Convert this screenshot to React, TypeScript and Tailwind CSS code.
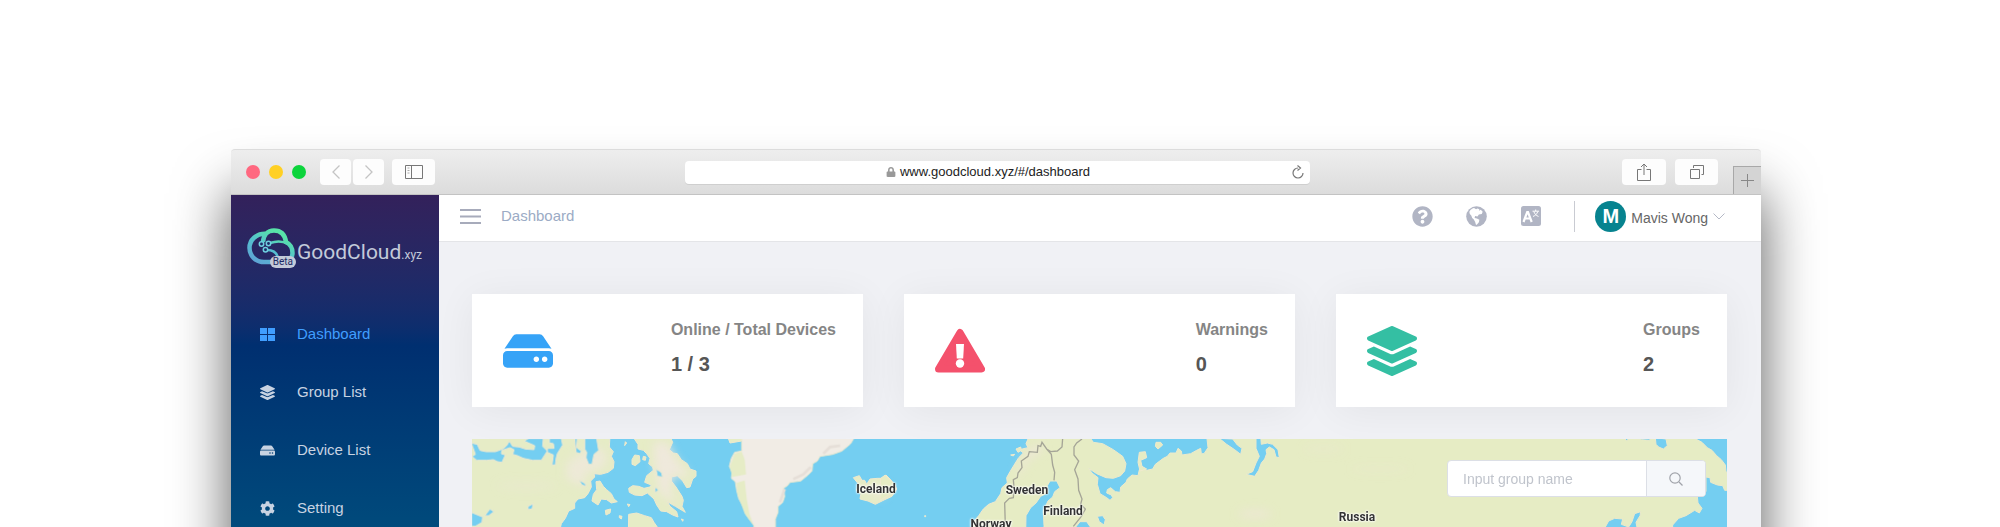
import { useState } from "react";
import { FaCog, FaHdd, FaLayerGroup, FaLock, FaQuestionCircle } from "react-icons/fa";

const NAV = [
  { label: "Dashboard", icon: TilesIcon },
  { label: "Group List", icon: FaLayerGroup },
  { label: "Device List", icon: FaHdd },
  { label: "Setting", icon: FaCog },
];

const PLACES = [
  { name: "Iceland", x: 404, y: 50 },
  { name: "Sweden", x: 555, y: 51 },
  { name: "Finland", x: 591, y: 72 },
  { name: "Norway", x: 519, y: 85 },
  { name: "Russia", x: 885, y: 78 },
];

const MAP_WIDTH = 1255;

function TilesIcon({ className }: { className?: string }) {
  return (
    <svg viewBox="0 0 15 15" className={className} fill="currentColor" aria-hidden="true">
      <rect x="0" y="1" width="7" height="6" />
      <rect x="8" y="1" width="7" height="6" />
      <rect x="0" y="8" width="7" height="6" />
      <rect x="8" y="8" width="7" height="6" />
    </svg>
  );
}

function WarningIcon({ className }: { className?: string }) {
  return (
    <svg viewBox="0 0 50 50" className={className} aria-hidden="true">
      <path
        d="M25 6.5L46.500 43H3.500z"
        fill="currentColor"
        stroke="currentColor"
        strokeWidth="7"
        strokeLinejoin="round"
      />
      <path d="M21 18h8l-.8 14.500h-6.400z" fill="#fff" />
      <circle cx="25" cy="37.500" r="4.200" fill="#fff" />
    </svg>
  );
}

function GlobeIcon({ className }: { className?: string }) {
  return (
    <svg viewBox="0 0 22 22" className={className} aria-hidden="true">
      <circle cx="11" cy="11" r="10.800" fill="currentColor" />
      <path
        d="M3.500 6C5 3.500 7 2.500 8.500 2.200L10.500 3.500 12 2.500 14 3.500 13.500 5 15.500 4 17.500 6 16.500 8.500 13.500 9 12 11 9.500 10.500 9 12.500 11.500 13 14 14.500 13.500 17 11.500 19.500 10.500 19.800 9.500 16.500 8 14 6.500 12.500 5.500 10 4 8.500z"
        fill="#fff"
      />
    </svg>
  );
}

function TranslateIcon({ className }: { className?: string }) {
  return (
    <svg viewBox="0 0 20 20" className={className} fill="none" aria-hidden="true">
      <rect width="20" height="20" rx="2.500" fill="currentColor" />
      <path d="M2.500 16L6.200 6h.8l3.700 10M3.800 12.500h5.600" stroke="#fff" strokeWidth="2.200" />
      <path
        d="M11.500 5.200h6.500M14.700 3.500v1.700M12.800 5.500c.8 2.500 2.500 4 4.700 5M16.800 5.500c-.8 2.500-2.500 4-4.800 5"
        stroke="#fff"
        strokeWidth="1"
      />
    </svg>
  );
}

function Logo() {
  return (
    <a href="#/dashboard" className="flex items-end pl-4 font-[Roboto] text-[#c3cad9]">
      <span className="relative mr-[2px] block h-10 w-12">
        <svg viewBox="0 0 48 40" className="h-10 w-12" fill="none" aria-hidden="true">
          <defs>
            <linearGradient id="cloud" x1="0" y1="40" x2="20" y2="0" gradientUnits="userSpaceOnUse">
              <stop offset="0" stopColor="#6295d6" />
              <stop offset=".6" stopColor="#55bfd0" />
              <stop offset="1" stopColor="#58e3a8" />
            </linearGradient>
          </defs>
          <g stroke="url(#cloud)" strokeWidth="4.500">
            <path d="M24 34H17C8.500 34 2.500 27.500 2.500 20 2.500 11.500 9.500 5.800 18 5.800" />
            <path d="M16 14C16.500 7 20.500 2.500 27 2.500c7 0 11 4.500 12 11.500C43 16 45.500 20 45.500 25c0 2-.5 3.500-1.500 5" />
          </g>
          <g stroke="url(#cloud)" strokeWidth="2.500">
            <path d="M23 15c7-2.500 13-2 18 1M20 22c6 0 10 3 11 8" />
          </g>
          <g stroke="#6fcfe0" strokeWidth="1.500" fill="#1d2a66">
            <circle cx="14.500" cy="16" r="2.200" />
            <circle cx="21.500" cy="15.500" r="2.200" />
            <circle cx="18.500" cy="21.800" r="2.200" />
          </g>
        </svg>
        <span className="absolute -right-px bottom-0 rounded-full bg-[#c3cad9] px-[3px] text-[10px] leading-3 text-[#1d2a66]">
          Beta
        </span>
      </span>
      <span className="text-[21px] leading-8">
        GoodCloud<span className="text-xs">.xyz</span>
      </span>
    </a>
  );
}

function BrowserBar() {
  return (
    <div className="flex h-[46px] items-center rounded-t border-y border-t-[#dcdcdc] border-b-[#c3c3c3] bg-linear-to-b from-[#eeeeee] to-[#dcdcdc] text-[#8a8a8a]">
      <div className="flex flex-1 items-center pl-[15px]">
        <div className="flex gap-[9px]">
          <span className="size-[14px] rounded-full bg-[#ff6880]" />
          <span className="size-[14px] rounded-full bg-[#ffd024]" />
          <span className="size-[14px] rounded-full bg-[#0cd43c]" />
        </div>
        <div className="ml-[14px] flex gap-[2px] text-[#c4c4c4]">
          <button type="button" aria-label="Back" className="flex h-[26px] w-[31px] items-center justify-center rounded bg-[#fdfdfd]">
            <svg viewBox="0 0 8 14" className="h-[14px] w-2" fill="none" stroke="currentColor" strokeWidth="1.300" aria-hidden="true">
              <path d="M7.500 .5L1 7l6.500 6.500" />
            </svg>
          </button>
          <button type="button" aria-label="Forward" className="flex h-[26px] w-[31px] items-center justify-center rounded bg-[#fdfdfd]">
            <svg viewBox="0 0 8 14" className="h-[14px] w-2" fill="none" stroke="currentColor" strokeWidth="1.300" aria-hidden="true">
              <path d="M.5 .5L7 7 .5 13.500" />
            </svg>
          </button>
        </div>
        <button type="button" aria-label="Show sidebar" className="ml-2 flex h-[26px] w-[43px] items-center justify-center rounded bg-[#fdfdfd]">
          <svg viewBox="0 0 18 14" className="h-[14px] w-[18px]" fill="none" stroke="#777" aria-hidden="true">
            <path d="M.5 .5h17v13H.5zM6.500 .5v13" />
            <path d="M2.500 3h2M2.500 5.500h2M2.500 8h2" stroke="#aaa" />
          </svg>
        </button>
      </div>

      <div className="relative mr-[13px] flex h-[23px] w-[625px] items-center justify-center gap-1 rounded-sm bg-white pr-[18px] shadow-[0_1px_0_#cfcfcf]">
        <FaLock className="size-[10px] text-[#999]" />
        <span className="text-[13px] text-[#222]">www.goodcloud.xyz/#/dashboard</span>
        <button type="button" aria-label="Reload" className="absolute right-[6px]">
          <svg viewBox="0 0 12 14" className="h-[14px] w-3" fill="none" stroke="#777" strokeWidth="1.200" aria-hidden="true">
            <path d="M6 3a5 5 0 1 0 5 5M5.500 .5L8.500 3 5.500 5.500" />
          </svg>
        </button>
      </div>

      <div className="flex flex-1 items-center justify-end self-stretch">
        <button type="button" aria-label="Share" className="flex h-[26px] w-11 items-center justify-center rounded bg-[#fdfdfd]">
          <svg viewBox="0 0 14 18" className="h-[18px] w-[14px]" fill="none" stroke="#777" aria-hidden="true">
            <path d="M4.500 6.500h-4v11h13v-11h-4M7 12V1M4 4l3-3 3 3" />
          </svg>
        </button>
        <button type="button" aria-label="Show tabs" className="ml-[9px] flex h-[26px] w-[43px] items-center justify-center rounded bg-[#fdfdfd]">
          <svg viewBox="0 0 14 14" className="size-[14px]" fill="none" stroke="#777" aria-hidden="true">
            <path d="M.5 4.500h9v9h-9zM3.500 3V.5h10v9h-2" />
          </svg>
        </button>
        <button type="button" aria-label="New tab" className="ml-[15px] flex h-7 w-7 items-center justify-center self-end border-t border-l border-[#a8a8a8] bg-[#d4d4d4]">
          <svg viewBox="0 0 13 13" className="size-[13px]" stroke="#888" aria-hidden="true">
            <path d="M6.500 0v13M0 6.500h13" />
          </svg>
        </button>
      </div>
    </div>
  );
}

function Header() {
  return (
    <header className="flex h-[47px] items-center border-b border-[#e4e5e8] bg-white pr-9 pb-1 pl-[21px] text-[#b1b5c4]">
      <button type="button" aria-label="Toggle menu">
        <svg viewBox="0 0 21 15" className="block h-[15px] w-[21px]" stroke="#a7abbb" strokeWidth="2" aria-hidden="true">
          <path d="M0 1h21M0 7.500h21M0 14h21" />
        </svg>
      </button>
      <h1 className="ml-5 text-[15px] text-[#9babc5]">Dashboard</h1>
      <div className="ml-auto flex items-center">
        <button type="button" aria-label="Help">
          <FaQuestionCircle className="size-[21px]" />
        </button>
        <button type="button" aria-label="Region" className="ml-[33px]">
          <GlobeIcon className="size-[21px]" />
        </button>
        <button type="button" aria-label="Language" className="ml-[34px]">
          <TranslateIcon className="size-5" />
        </button>
        <span className="ml-[33px] h-[31px] w-px bg-[#c9cbd2]" />
        <button type="button" className="ml-5 flex items-center text-sm text-[#666]">
          <span className="mr-[5px] flex size-[31px] items-center justify-center rounded-full bg-[#07838f] text-xl font-bold text-white">
            M
          </span>
          <span className="pt-1">Mavis Wong</span>
          <svg viewBox="0 0 12 7" className="ml-[5px] h-[7px] w-3" fill="none" stroke="#b5b9c6" aria-hidden="true">
            <path d="M.5 .5L6 6l5.500-5.500" />
          </svg>
        </button>
      </div>
    </header>
  );
}

interface StatCardProps {
  label: string;
  value: string;
  icon: React.ReactNode;
}

function StatCard({ label, value, icon }: StatCardProps) {
  return (
    <div className="flex h-[113px] items-center justify-between bg-white pr-[27px] pl-[31px] shadow-[0_4px_40px_rgba(0,0,0,0.06)]">
      {icon}
      <dl className="pb-1 font-bold">
        <dt className="text-base leading-5 text-[#858585]">{label}</dt>
        <dd className="mt-[10px] text-xl leading-7 text-[#565656]">{value}</dd>
      </dl>
    </div>
  );
}

function WorldMap() {
  return (
    <svg viewBox="0 0 3765 600" className="block w-full" aria-hidden="true">
      <defs>
        <filter id="soft" x="-50%" y="-50%" width="200%" height="200%">
          <feGaussianBlur stdDeviation="14" />
        </filter>
      </defs>
      <rect width="3765" height="600" fill="#74cef1" />

      {/* Northern Canada and Greenland */}
      <g transform="translate(-96 -60)" fill="#e6ecc6" stroke="#efe9cd" strokeWidth="3">
        <path d="M90 50H510L508 84 520 98 514 112 522 128 520 148 504 160 482 166 462 164 464 174 452 186 454 204 444 224 434 236 414 240 404 252 404 268 386 276 376 298 364 314 358 340V700H90z" />
        <path d="M468 188L480 186 490 202 500 212 514 224 522 240 532 248 514 252 500 242 484 240 474 258 456 246 460 226 470 212z" />
        <path d="M578 52H690L698 70 688 92 700 102 712 104 724 122 742 134 750 150 768 156 768 172 758 180 750 204 740 206 728 186 712 170 694 174 694 186 708 204 726 232 730 244 726 262 736 280 706 262 682 248 690 262 710 278 714 294 698 288 680 278 662 276 650 258 642 240 622 222 606 230 584 228 568 220 566 208 578 200 596 202 612 208 630 204 634 198 614 190 620 170 640 154 638 144 626 134 630 118 620 104 610 94 594 90 594 76z" />
        <path d="M584 108L598 110 600 128 586 140 576 136 576 122zM610 112l8 2-2 10-8-2zM496 274l16-4-2 12-12 6zM538 290l8 2-2 8-6-4zM562 255l8 2-4 6zM724 300l6 2-2 5zM556 68l4 4-6 8z" />
        <path d="M566 286L590 282 614 290 634 296 642 310 656 330V700H560z" />
        <path d="M862 50H905V66L870 72z" />
        <path d="M1240 176L1258 170 1266 184 1274 184 1280 196 1290 180 1312 178 1334 178 1338 168 1350 180 1362 194 1370 210 1356 232 1334 242 1306 256 1284 246 1260 240 1262 226 1250 214 1256 196z" />
        {/* tundra shading, kept inside the coastlines */}
        <g filter="url(#soft)" stroke="none" fill="#efe8dc">
          <path d="M380 130L460 80 500 100 495 145 440 160 430 205 380 180z" opacity=".8" />
          <path d="M640 70L680 70 710 125 745 164 735 180 700 160 690 215 715 255 660 225 645 140z" />
          <ellipse cx="260" cy="200" rx="90" ry="14" opacity=".3" />
          <path d="M1275 218L1345 200 1325 235z" />
        </g>
        <g fill="#74cef1" stroke="#eee8d0">
          <path d="M94 72L112 76 120 94 138 98 166 98 188 90 200 80 208 66 218 82 238 84 256 90 282 92 284 80 252 66 266 58H310L308 82 322 96 304 124 278 124 250 118 232 110 218 106 222 92 210 86 186 94 184 104 196 108 186 130 172 128 160 122 140 124 110 124 96 112 106 106z" />
          <path d="M328 58H364L368 78 352 104 348 120 346 138H336L340 108 322 100 322 88 342 88 340 74 328 72z" />
          <path d="M434 58H470L476 94 462 106 456 136 446 136 438 116 440 100 434 90zM404 58H412L410 86 424 96 420 104 408 100z" />
          <path d="M416 182L436 194 438 202 426 198zM264 262L280 254 276 270 264 272zM134 290L150 270 162 278 146 290zM94 280L128 294 126 310 106 322H94zM648 150L664 160 668 174 652 172zM644 204L656 212 646 222z" />
        </g>
        <path d="M905 50H1246L1232 74 1206 96 1178 106 1140 112 1132 126 1118 134 1116 156 1104 168 1082 186 1050 190 1042 200 1030 208 1034 232 1028 250 1014 262 1014 280 1006 300 1006 330 1000 700H950L942 320 920 290 916 276 896 238 890 214 886 188 874 178 876 160 868 142 874 118 884 100 905 96z" fill="#f1ece5" />
        <path d="M884 104L905 98 914 122 918 166 876 174 870 142zM890 192L914 184 920 240 928 284 940 318 914 284 892 224z" fill="#e6ecc6" stroke="none" />
        <path d="M1060 180l30-14 22-22M1020 250l14-40M1150 104l20-20 30-4" stroke="#e6dfd8" strokeWidth="8" fill="none" />
      </g>

      {/* Scandinavia and Russia */}
      <g transform="translate(1224 -60)" fill="#e6ecc4" stroke="#efe9cd" strokeWidth="3">
        <path d="M448 50L438 74 444 86 418 92 430 102 416 116 406 132 390 158 380 176 382 192 366 206 362 224 346 248 326 256 310 270 296 290 280 310 268 340V700H2600V50z" />
        <path d="M392 108l12-2-4 5zM408 90l14-6 2 10-10 6zM134 290h3v3h-3z" />
        <path d="M2 178L16 168 28 180 46 200 40 220 12 236 0 244z" />
        <g filter="url(#soft)" stroke="none" fill="#f0e6dc">
          <path d="M460 84L495 76 476 100 444 120 416 170 410 160 436 110z" />
          <ellipse cx="1125" cy="285" rx="50" ry="14" opacity=".6" />
          <ellipse cx="1330" cy="90" rx="60" ry="14" opacity=".2" />
          <ellipse cx="1500" cy="150" rx="90" ry="12" opacity=".15" />
        </g>
        <g fill="#74cef1" stroke="#ebe9cb">
          <path d="M510 186L530 186 540 206 524 218 518 234 504 246 490 276 492 320 500 700H430L438 290 452 266 468 252 482 232 502 222 502 200z" />
          <path d="M626 50L640 70 668 74 700 92 728 112 738 134 734 156 722 170 700 178 678 176 650 164 626 148 636 162 654 176 652 196 660 224 680 236 690 244 698 236 694 228 680 222 682 212 692 206 706 218 720 220 722 204 738 190 742 180 756 168 774 170 778 152 792 150 800 154 818 150 826 136 850 118 862 112 870 102 888 102 894 88 904 96 906 108 932 104 950 94 962 88 964 104 972 104 984 86 980 50z" />
          <path d="M1018 58L1058 60 1072 78 1086 88 1082 106 1064 92 1040 76z" />
          <path d="M1128 50H1142L1144 76 1162 72 1178 76 1194 92 1198 116 1188 114 1182 92 1168 84 1158 92 1160 104 1154 120 1144 132 1136 154 1124 172 1098 166 1118 158 1128 132 1138 112 1128 88z" />
          <path d="M652 292L668 290 676 302 672 318 658 308zM600 308l20 0 14 20h-50z" />
        </g>
        <path d="M778 100L796 98 800 116 782 124 786 142 800 150 780 156 774 130zM828 70l14 0 6 8-14 12-8-8z" />
        <path
          d="M548 58L546 84 532 96 512 98 500 90 486 70 482 82 474 80 472 100 448 98 444 112 424 126 426 146 414 162 412 176 400 182 402 206 400 236 388 238 374 252 376 320M500 90L514 106 518 138 524 160 522 184M606 60L590 72 582 84 582 108 596 126 584 152 594 180 596 214 606 240 602 256 616 270 604 292 580 322"
          fill="none"
          stroke="#a5a597"
          strokeWidth="4"
        />
      </g>

      {/* Far east coast */}
      <g transform="translate(2484 -60)" fill="#74cef1" stroke="#ebe9cb" strokeWidth="3">
        <path d="M972 56H988L980 66zM1018 56h36l-6 8-24-2zM1066 56L1098 60 1102 80 1090 90 1076 84 1068 76z" />
        <path d="M1180 56H1290V166L1278 158 1276 138 1264 122 1250 110 1236 94 1222 86 1206 70z" />
        <path d="M1218 174L1230 176 1232 190 1252 198 1268 200 1274 214 1290 214V700H1110L1118 318 1136 298 1158 290 1184 274 1198 282 1206 268 1194 252 1192 232 1218 218z" />
        <path d="M916 324L926 306 944 298 968 300 964 316 986 324 996 308 1004 284 1022 278 1020 290 1008 310 1012 330V360H920z" />
      </g>
    </svg>
  );
}

export default function App() {
  const [query, setQuery] = useState("");

  return (
    <div className="h-screen overflow-hidden bg-white pt-[149px] pr-[239px] pl-[231px] font-['Liberation_Sans',Arial,sans-serif]">
      <div className="rounded-t shadow-[0_44px_56px_rgba(0,0,0,0.65)]">
        <BrowserBar />
        <div className="flex">
          <aside className="w-52 shrink-0 bg-linear-to-b from-[#33215b] from-0% via-[#002f70] via-17% to-[#159b9a] to-100% pt-[33px]">
            <Logo />
            <nav className="mt-[37px] flex flex-col">
              {NAV.map(({ label, icon: Icon }, i) => (
                <a
                  key={label}
                  href="#/dashboard"
                  aria-current={i === 0 ? "page" : undefined}
                  className={
                    i === 0
                      ? "flex h-[58px] items-center gap-[22px] pl-[29px] text-[15px] text-[#409eff]"
                      : "flex h-[58px] items-center gap-[22px] pl-[29px] text-[15px] text-[#c8d3e2]"
                  }
                >
                  <Icon className="size-[15px]" />
                  {label}
                </a>
              ))}
            </nav>
          </aside>

          <div className="min-w-0 flex-1 bg-[#f0f1f5]">
            <Header />
            <main className="pt-[52px] pr-[34px] pl-[33px]">
              <div className="grid grid-cols-3 gap-[41px]">
                <StatCard
                  label="Online / Total Devices"
                  value="1 / 3"
                  icon={<FaHdd className="size-[50px] text-[#36a3f7]" />}
                />
                <StatCard
                  label="Warnings"
                  value="0"
                  icon={<WarningIcon className="size-[50px] text-[#f4516c]" />}
                />
                <StatCard
                  label="Groups"
                  value="2"
                  icon={<FaLayerGroup className="size-[50px] text-[#34bfa3]" />}
                />
              </div>

              <section aria-label="Device map" className="relative mt-8 h-[640px] overflow-hidden bg-[#e6ecc4]">
                <WorldMap />
                {PLACES.map((place) => (
                  <span
                    key={place.name}
                    className="absolute -translate-x-1/2 -translate-y-1/2 font-[Roboto] text-xs font-bold text-[#333] [text-shadow:0_0_2px_#fff,0_0_2px_#fff,0_0_3px_#fff]"
                    style={{ left: `${(place.x / MAP_WIDTH) * 100}%`, top: place.y }}
                  >
                    {place.name}
                  </span>
                ))}
                <form
                  className="absolute top-[21px] right-[21px] flex h-[37px] overflow-hidden rounded border border-[#dcdfe6] bg-white"
                  onSubmit={(e) => e.preventDefault()}
                >
                  <input
                    type="text"
                    aria-label="Group name"
                    placeholder="Input group name"
                    value={query}
                    onChange={(e) => setQuery(e.target.value)}
                    className="w-[198px] px-[15px] text-sm text-[#606266] outline-none placeholder:text-[#c0c4cc]"
                  />
                  <button
                    type="submit"
                    aria-label="Search"
                    className="flex w-[59px] items-center justify-center border-l border-[#dcdfe6] bg-[#f5f7fa]"
                  >
                    <svg viewBox="0 0 14 14" className="size-[14px]" fill="none" stroke="#a0a3aa" strokeWidth="1.200" aria-hidden="true">
                      <circle cx="6" cy="6" r="5.200" />
                      <path d="M10 10l3.500 3.500" />
                    </svg>
                  </button>
                </form>
              </section>
            </main>
          </div>
        </div>
      </div>
    </div>
  );
}
